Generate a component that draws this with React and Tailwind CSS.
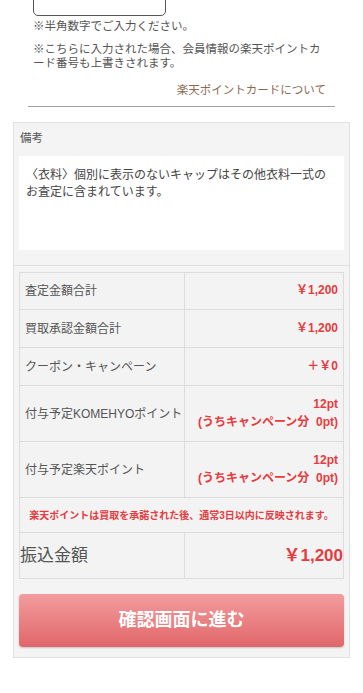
import React from 'react';

const font = { fontFamily: '"Liberation Sans", "Noto Sans CJK JP", sans-serif' };

const rows = [
  { label: '査定金額合計', value: '￥1,200', h: 'h-[37px]' },
  { label: '買取承認金額合計', value: '￥1,200', h: 'h-[38px]' },
  { label: 'クーポン・キャンペーン', value: '＋￥0', h: 'h-[38px]' },
  { label: '付与予定KOMEHYOポイント', value: '12pt', sub: '(うちキャンペーン分  0pt)', h: 'h-[56px]' },
  { label: '付与予定楽天ポイント', value: '12pt', sub: '(うちキャンペーン分  0pt)', h: 'h-[56px]' },
];

function App() {
  return (
    <div className="min-h-[693px] bg-white overflow-hidden" style={font}>
      {/* card number input tail + notes */}
      <div className="mx-[28px] pl-[5px] pr-[9px] border-b border-[#a0a0a0] pb-[9px]">
        <div className="w-[133px] h-[33px] -mt-[17px] border border-[#555] rounded-[5px] bg-white" />
        <p className="mt-[3px] text-[11.5px] leading-[14px] text-[#555]">※半角数字でご入力ください。</p>
        <p className="mt-[9px] text-[11.5px] leading-[14px] text-[#555]">
          ※こちらに入力された場合、会員情報の楽天ポイントカード番号も上書きされます。
        </p>
        <p className="mt-[13px] text-right text-[11.5px] leading-[14px] text-[#8c6a52]">楽天ポイントカードについて</p>
      </div>

      <div className="mx-[13px] mt-[15px] border border-[#e0e0e0] bg-[#f4f4f4]">
        {/* remarks */}
        <div className="border-b border-[#e0e0e0] px-[5px] pb-[15px]">
          <p className="pt-[8px] pl-[1px] text-[11.5px] leading-[14px] text-[#555]">備考</p>
          <div className="mt-[11px] h-[94px] bg-white pl-[7px] pr-[4px] pt-[11px] text-[12px] leading-[16.5px] text-[#444]">
            〈衣料〉個別に表示のないキャップはその他衣料一式の
            <br />
            お査定に含まれています。
          </div>
        </div>

        {/* totals table */}
        <div className="mx-[5px] mt-[6px] border border-[#dcdcdc] bg-[#f3f3f3]">
          {rows.map((r) => (
            <div key={r.label} className={`flex ${r.h} border-b border-[#dcdcdc]`}>
              <div className="w-[165px] shrink-0 border-r border-[#dcdcdc] flex items-center pl-[5px] text-[12px] text-[#555]">
                {r.label}
              </div>
              <div className="flex-1 flex flex-col items-end justify-center pr-[5px] text-[12px] font-bold text-[#e63c3f] leading-[17.5px]">
                <span>{r.value}</span>
                {r.sub && <span className="whitespace-pre">{r.sub}</span>}
              </div>
            </div>
          ))}
          <div className="h-[35px] border-b border-[#dcdcdc] flex items-center justify-center text-[10px] font-bold text-[#e63c3f]">
            楽天ポイントは買取を承諾された後、通常3日以内に反映されます。
          </div>
          <div className="flex h-[45px]">
            <div className="w-[165px] shrink-0 border-r border-[#dcdcdc] flex items-center text-[17px] text-[#555]">
              振込金額
            </div>
            <div className="flex-1 flex items-center justify-end text-[17px] font-bold text-[#e63c3f]">
              ￥1,200
            </div>
          </div>
        </div>

        <div className="px-[5px] pt-[15px] pb-[10px]">
          <button
            type="button"
            className="w-full h-[53px] rounded-[4px] bg-gradient-to-b from-[#f29c9e] to-[#e0666a] text-white text-[18px] font-bold shadow-[0_1px_2px_rgba(0,0,0,0.2)]"
          >
            確認画面に進む
          </button>
        </div>
      </div>
    </div>
  );
}

export default App;
